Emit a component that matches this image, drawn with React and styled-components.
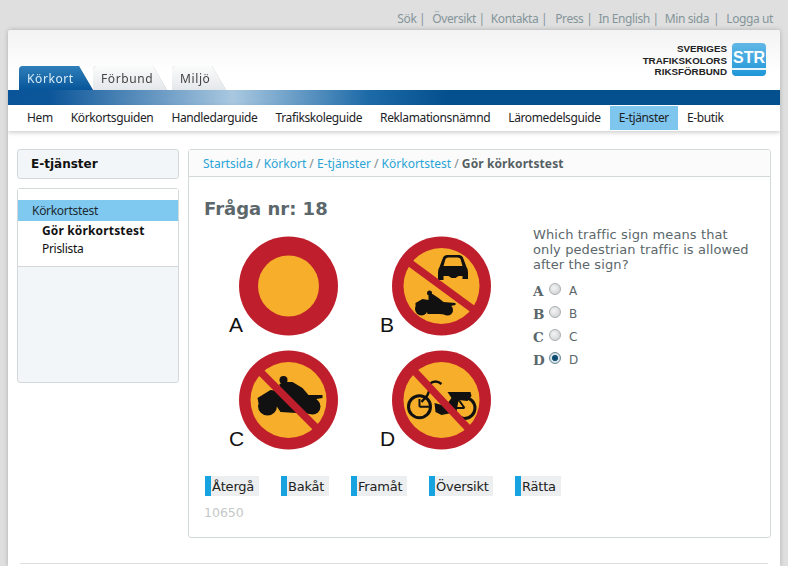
import React from "react";
import styled, { createGlobalStyle } from "styled-components";

const Global = createGlobalStyle`
  html, body { margin: 0; padding: 0; height: 566px; overflow: hidden; background: #dfdfdf; }
  body { font-family: "Noto Sans", Tahoma, sans-serif; font-size: 12px; color: #222; }
`;

const TopLinks = styled.div`
  height: 30px;
  box-sizing: border-box;
  padding: 9px 15px 0 0;
  display: flex;
  justify-content: flex-end;
  line-height: 20px;
  font-size: 12px;
  letter-spacing: -0.4px;
  color: #84959a;
`;

const TopLink = styled.span`
  margin-left: ${props => props.$gap}px;
  white-space: pre;
`;

const Page = styled.div`
  margin: 0 8px;
  height: 536px;
  background: #fff;
  border-radius: 3px 3px 0 0;
  box-shadow: 0 0 5px rgba(0, 0, 0, 0.22);
  overflow: hidden;
`;

const Header = styled.div`
  height: 60px;
  padding: 0 14px 0 11px;
  display: flex;
  justify-content: space-between;
  background: linear-gradient(#f3f3f3, #ffffff 70%);
`;

const Tabs = styled.div`
  align-self: flex-end;
  display: flex;
  height: 24px;
`;

const TabOutline = styled.div`
  margin-right: ${props => props.$mr || 0}px;
  filter: drop-shadow(0 0 0.6px #aab2b6);
`;

const Tab = styled.div`
  width: ${props => props.$w}px;
  height: 24px;
  padding-left: 8px;
  box-sizing: border-box;
  line-height: 25px;
  font-size: 12px;
  letter-spacing: 0.6px;
  color: ${props => (props.$active ? "#d8ecf8" : "#444")};
  background: ${props => (props.$active ? "linear-gradient(#2f7fba, #07559a)" : "linear-gradient(#fbfbfb, #e4e8ea)")};
  border-radius: 4px 0 0 0;
  clip-path: polygon(0 0, calc(100% - 14px) 0, 100% 100%, 0 100%);
`;

const Logo = styled.div`
  display: flex;
  gap: 5px;
  padding-top: 13px;
`;

const LogoText = styled.div`
  font-family: "Liberation Sans", Arial, sans-serif;
  font-weight: 700;
  font-size: 9.8px;
  line-height: 11.5px;
  text-align: right;
  color: #222;
`;

const LogoMark = styled.div`
  width: 34px;
  height: 33px;
  padding-top: 6px;
  border-radius: 4px;
  background: linear-gradient(#62b8e6, #1f97d8);
  box-sizing: border-box;
`;

const LogoLetters = styled.div`
  height: 19px;
  border-bottom: 2px solid #e8f5fc;
  color: #fff;
  font-family: "Liberation Sans", Arial, sans-serif;
  font-weight: 700;
  font-size: 16px;
  line-height: 18px;
  text-align: center;
`;

const BlueBar = styled.div`
  height: 15px;
  background: linear-gradient(90deg, #0a5499 0, #0b5599 40px, #a9c8e0 225px, #1d6aa8 360px, #04508f 440px, #04508f 100%);
`;

const Nav = styled.nav`
  height: 26px;
  display: flex;
  padding: 1px 0 0 10px;
  box-sizing: border-box;
  box-shadow: 0 2px 4px rgba(0, 0, 0, 0.18);
`;

const NavItem = styled.div`
  padding: 0 9px;
  height: 24px;
  line-height: 23px;
  font-size: 12px;
  letter-spacing: -0.37px;
  color: #1c2326;
  white-space: nowrap;
  background: ${props => (props.$active ? "#7fc6ef" : "transparent")};
`;

const Main = styled.div`
  display: flex;
  gap: 9px;
  padding: 18px 9px 0 9px;
`;

const Sidebar = styled.aside`
  width: 162px;
  display: flex;
  flex-direction: column;
  gap: 9px;
`;

const SideTitle = styled.div`
  height: 30px;
  box-sizing: border-box;
  padding-left: 13px;
  line-height: 28px;
  font-family: "DejaVu Sans", Verdana, sans-serif;
  font-weight: 700;
  font-size: 12px;
  color: #111;
  background: #f2f6f8;
  border: 1px solid #d3d9db;
  border-radius: 3px;
`;

const SideBox = styled.div`
  height: 195px;
  box-sizing: border-box;
  border: 1px solid #d3d9db;
  border-radius: 3px;
  background: #f2f6f8;
`;

const SideMenu = styled.div`
  height: 78px;
  box-sizing: border-box;
  padding-top: 11px;
  background: #fff;
  border-bottom: 1px solid #d3d9db;
`;

const SideHead = styled.div`
  height: 21px;
  margin-bottom: 1px;
  line-height: 21px;
  padding-left: 14px;
  font-size: 12px;
  letter-spacing: -0.3px;
  color: #1c2a30;
  background: #7fc8f0;
`;

const SideLink = styled.div`
  padding-left: 24px;
  height: 18px;
  line-height: 18px;
  font-size: 12px;
  letter-spacing: ${props => (props.$current ? "0.15px" : "-0.3px")};
  font-weight: ${props => (props.$current ? 700 : 400)};
  color: #111;
`;

const Content = styled.section`
  width: 583px;
  height: 389px;
  box-sizing: border-box;
  border: 1px solid #d3d9db;
  border-radius: 3px;
`;

const Crumbs = styled.div`
  height: 27px;
  box-sizing: border-box;
  padding-left: 14px;
  line-height: 28px;
  font-size: 12px;
  color: #7d898d;
  background: #fbfbfb;
  border-bottom: 1px solid #d3d9db;
`;

const Crumb = styled.span`
  color: #2aa4d6;
`;

const CrumbNow = styled.span`
  font-weight: 700;
  letter-spacing: 0.1px;
  color: #555f63;
`;

const Body = styled.div`
  padding: 21px 15px 0 15px;
  font-family: "DejaVu Sans", Verdana, sans-serif;
`;

const Heading = styled.h1`
  margin: 0;
  height: 22px;
  line-height: 22px;
  font-size: 18px;
  font-weight: 700;
  color: #5b676b;
`;

const Quiz = styled.div`
  display: flex;
  margin-top: 9px;
  height: 228px;
`;

const SignGrid = styled.div`
  flex: none;
  width: 329px;
  padding-left: 8px;
  box-sizing: border-box;
  display: grid;
  grid-template-columns: 153px 153px;
  grid-auto-rows: 114px;
`;

const Question = styled.div`
  margin-top: -2px;
`;

const QuestionText = styled.p`
  margin: 0 0 7px;
  width: 222px;
  font-size: 13px;
  letter-spacing: 0.1px;
  line-height: 15px;
  color: #5b676b;
`;

const Option = styled.label`
  display: flex;
  align-items: center;
  height: 23px;
  color: #5b676b;
`;

const OptionKey = styled.span`
  width: 16px;
  font-family: "DejaVu Serif", Georgia, serif;
  font-weight: 700;
  font-size: 13.5px;
`;

const OptionLabel = styled.span`
  margin-left: 8px;
  font-size: 12px;
`;

const Radio = styled.input`
  appearance: none;
  margin: -3px 0 0;
  width: 12px;
  height: 12px;
  border-radius: 50%;
  border: 1px solid #a8afb2;
  background: radial-gradient(circle at 40% 40%, #f4f4f4, #c9cccd);
  box-sizing: border-box;
  &:checked {
    border-color: #6c8894;
    background: radial-gradient(closest-side, #0b3f5e 0, #14587e 55%, #dfe8ec 70%, #cfd8dc 100%);
  }
`;

const Buttons = styled.div`
  display: flex;
  margin-top: 19px;
  padding-left: 1px;
  gap: 22px;
`;

const Button = styled.button`
  width: ${props => props.$w}px;
  height: 20px;
  padding: 0 0 0 1px;
  box-sizing: border-box;
  text-align: left;
  white-space: nowrap;
  border: none;
  border-left: 6px solid #17a3df;
  background: #eceeef;
  font-family: "DejaVu Sans", Verdana, sans-serif;
  font-size: 13px;
  letter-spacing: -0.2px;
  line-height: 19px;
  color: #222;
`;

const Code = styled.div`
  margin-top: 9px;
  font-size: 12.5px;
  color: #c4c8c9;
`;

const Footer = styled.div`
  margin: 25px 12px 0;
  border-top: 1px solid #dcdfe0;
`;

const Ring = ({ inner = 38 }) => (
  <>
    <circle cx="0" cy="0" r="49.5" fill="#bf1f2c" />
    <circle cx="0" cy="0" r={inner} fill="#f6ae2b" />
  </>
);

const Sign = ({ letter, labelX = 17, children, inner }) => (
  <svg width="153" height="114" viewBox="0 0 153 114">
    <text x={labelX} y="103" fontFamily="Liberation Sans, Arial, sans-serif" fontSize="21" fill="#111">{letter}</text>
    <g transform="translate(76.5 57)">
      <Ring inner={inner} />
      {children}
    </g>
  </svg>
);

const Bar = ({ x1, y1, x2, y2 }) => (
  <line x1={x1} y1={y1} x2={x2} y2={y2} stroke="#bf1f2c" strokeWidth="7.5" />
);

const links = [
  ["Sök |", 0], ["Översikt |", 7], ["Kontakta |", 6], ["Press |", 8],
  ["In English |", 6], ["Min sida", 6], ["|", 4], ["Logga ut", 7],
];

const navItems = ["Hem", "Körkortsguiden", "Handledarguide", "Trafikskoleguide", "Reklamationsnämnd", "Läromedelsguide", "E-tjänster", "E-butik"];

const options = ["A", "B", "C", "D"];
const actions = [["Återgå", 54], ["Bakåt", 48], ["Framåt", 56], ["Översikt", 64], ["Rätta", 46]];

export default function App() {
  return (
    <>
      <Global />
      <TopLinks>
        {links.map(([text, gap]) => (
          <TopLink key={text} $gap={gap}>{text}</TopLink>
        ))}
      </TopLinks>
      <Page>
        <Header>
          <Tabs>
            <TabOutline><Tab $active $w={74}>Körkort</Tab></TabOutline>
            <TabOutline $mr={5}><Tab $w={74}>Förbund</Tab></TabOutline>
            <TabOutline><Tab $w={54}>Miljö</Tab></TabOutline>
          </Tabs>
          <Logo>
            <LogoText>SVERIGES<br />TRAFIKSKOLORS<br />RIKSFÖRBUND</LogoText>
            <LogoMark><LogoLetters>STR</LogoLetters></LogoMark>
          </Logo>
        </Header>
        <BlueBar />
        <Nav>
          {navItems.map(item => (
            <NavItem key={item} $active={item === "E-tjänster"}>{item}</NavItem>
          ))}
        </Nav>
        <Main>
          <Sidebar>
            <SideTitle>E-tjänster</SideTitle>
            <SideBox>
              <SideMenu>
                <SideHead>Körkortstest</SideHead>
                <SideLink $current>Gör körkortstest</SideLink>
                <SideLink>Prislista</SideLink>
              </SideMenu>
            </SideBox>
          </Sidebar>
          <Content>
            <Crumbs>
              <Crumb>Startsida</Crumb> / <Crumb>Körkort</Crumb> / <Crumb>E-tjänster</Crumb> / <Crumb>Körkortstest</Crumb> / <CrumbNow>Gör körkortstest</CrumbNow>
            </Crumbs>
            <Body>
              <Heading>Fråga nr: 18</Heading>
              <Quiz>
                <SignGrid>
                  <Sign letter="A" inner={30.5} />
                  <Sign letter="B" labelX={15}>
                    <path fillRule="evenodd" d="M-2,-19 L1,-27 Q2,-31 6,-31 H17 Q21,-31 22,-27 L25,-19 Q26.5,-17 26.5,-14 V-7 H21 V-10 H17 L14,-8 L10,-8 L7,-10 H2 V-6 H-3.5 V-14 Q-3.5,-17 -2,-19 Z M2,-20 H21 L19,-27 Q18.5,-28.5 16,-28.5 H7 Q4.5,-28.5 4,-27 Z" fill="#111" />
                    <circle cx="-20" cy="23" r="6.5" fill="#111" />
                    <circle cx="6" cy="24" r="5.5" fill="#111" />
                    <circle cx="-12" cy="7" r="2.5" fill="#111" />
                    <path d="M-13,8 L-9,8 L-3,12 L2,16 L14,17 V19 L9,20 L11,26 L8,29 L-2,28 L-14,28 L-16,20 L-26,20 V17 L-19,13 L-13,14 Z" fill="#111" />
                    <Bar x1="-39" y1="-28.5" x2="38" y2="28" />
                  </Sign>
                  <Sign letter="C">
                    <circle cx="-21" cy="6" r="9.5" fill="#111" />
                    <circle cx="24" cy="6.5" r="8" fill="#111" />
                    <circle cx="-5" cy="-20" r="4" fill="#111" />
                    <path d="M-9,-16 L-4,-18 L4,-18 L14,-12 L20,-5 L34,-5 V-2 L28,-1 L30,6 L24,14 L-8,12 L-14,3 L-30,3 L-31,-2 L-18,-10 L-9,-9 Z" fill="#111" />
                    <Bar x1="-33" y1="-33" x2="33" y2="33" />
                  </Sign>
                  <Sign letter="D" labelX={15}>
                    <circle cx="-22" cy="6.7" r="11" fill="none" stroke="#111" strokeWidth="3" />
                    <circle cx="23" cy="8" r="10.5" fill="none" stroke="#111" strokeWidth="3" />
                    <path d="M-22,6.7 V-1 M-22,6.7 H-12 M23,8 H13 M23,8 L18,1" stroke="#111" strokeWidth="2" fill="none" />
                    <path d="M-12,-16 Q-6,-21 0,-16 M-10,-15 L-14,-5 L-20,2" stroke="#111" strokeWidth="2.4" fill="none" />
                    <path d="M6,-8 H29 L30,-4 L26,1 L17,0 L15,12 L0,15 L-6,12 L-7,3 L4,6 L10,-2 Z" fill="#111" />
                    <Bar x1="-31" y1="-33" x2="31" y2="33" />
                  </Sign>
                </SignGrid>
                <Question>
                  <QuestionText>Which traffic sign means that only pedestrian traffic is allowed after the sign?</QuestionText>
                  {options.map(opt => (
                    <Option key={opt}>
                      <OptionKey>{opt}</OptionKey>
                      <Radio type="radio" name="svar" defaultChecked={opt === "D"} />
                      <OptionLabel>{opt}</OptionLabel>
                    </Option>
                  ))}
                </Question>
              </Quiz>
              <Buttons>
                {actions.map(([action, w]) => (
                  <Button key={action} $w={w}>{action}</Button>
                ))}
              </Buttons>
              <Code>10650</Code>
            </Body>
          </Content>
        </Main>
        <Footer />
      </Page>
    </>
  );
}
